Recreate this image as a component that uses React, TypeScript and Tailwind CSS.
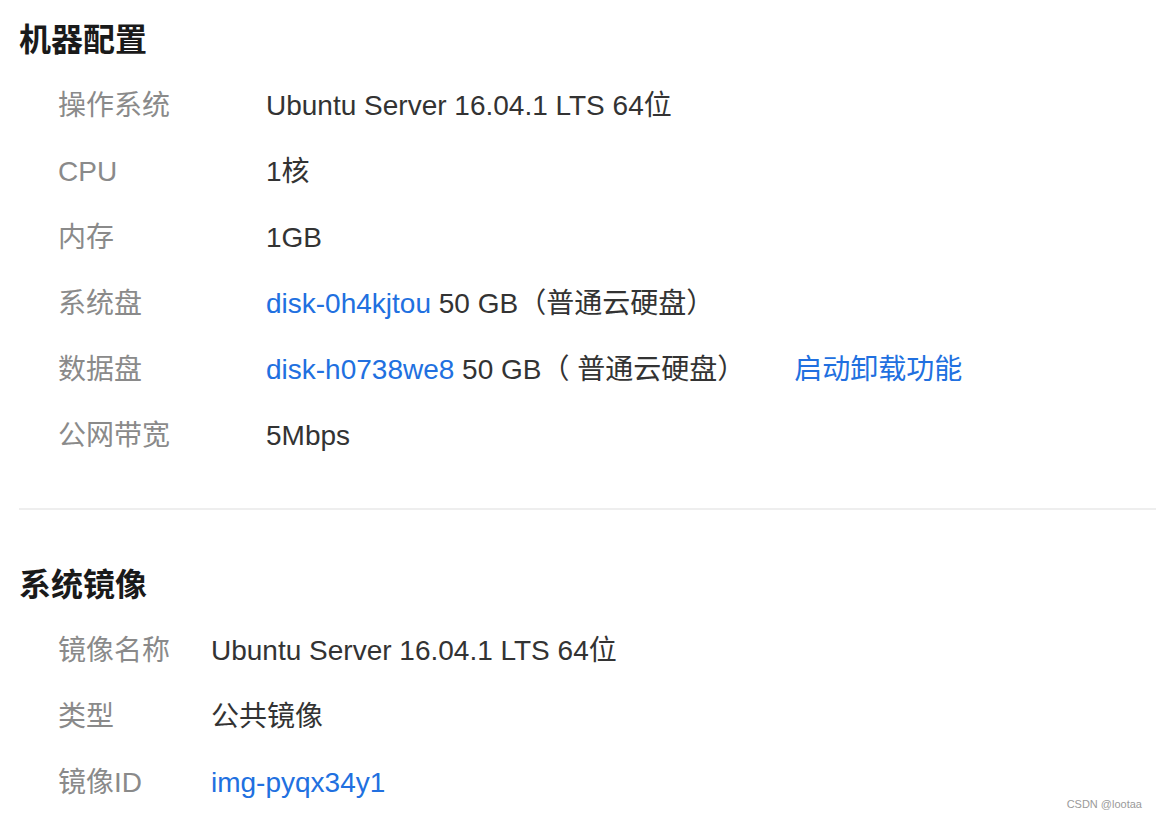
const font = { fontFamily: '"Liberation Sans", "Noto Sans CJK SC", sans-serif' };

type Row = { label: string; value: React.ReactNode };

const machine: Row[] = [
  { label: "操作系统", value: "Ubuntu Server 16.04.1 LTS 64位" },
  { label: "CPU", value: "1核" },
  { label: "内存", value: "1GB" },
  {
    label: "系统盘",
    value: (
      <>
        <span className="text-[#2170e0]">disk-0h4kjtou</span> 50 GB（普通云硬盘）
      </>
    ),
  },
  {
    label: "数据盘",
    value: (
      <>
        <span className="text-[#2170e0]">disk-h0738we8</span> 50 GB（ 普通云硬盘）
        <span className="ml-[49px] text-[#2170e0]">启动卸载功能</span>
      </>
    ),
  },
  { label: "公网带宽", value: "5Mbps" },
];

const image: Row[] = [
  { label: "镜像名称", value: "Ubuntu Server 16.04.1 LTS 64位" },
  { label: "类型", value: "公共镜像" },
  { label: "镜像ID", value: <span className="text-[#2170e0]">img-pyqx34y1</span> },
];

function Section({ title, rows, labelWidth }: { title: string; rows: Row[]; labelWidth: string }) {
  return (
    <section>
      <h2 className="h-[40px] pl-[19px] text-[32px] font-bold leading-[40px] text-[#1a1a1a]">{title}</h2>
      <div className="mt-[13px] pl-[58px]">
        {rows.map((r) => (
          <div key={r.label} className="flex h-[66px] items-center text-[28px]">
            <span className={`${labelWidth} shrink-0 text-[#8a8a8a]`}>{r.label}</span>
            <span className="whitespace-nowrap text-[#333]">{r.value}</span>
          </div>
        ))}
      </div>
    </section>
  );
}

export default function App() {
  return (
    <div className="relative h-[820px] w-[1156px] overflow-hidden bg-white pt-[20px]" style={font}>
      <Section title="机器配置" rows={machine} labelWidth="w-[208px]" />
      <div className="mt-[39px] ml-[19px] h-[2px] bg-[#eeeeee]" />
      <div className="mt-[55px]">
        <Section title="系统镜像" rows={image} labelWidth="w-[153px]" />
      </div>
      <span className="absolute bottom-[8px] right-[14px] text-[11px] text-[#9a9a9a]">CSDN @lootaa</span>
    </div>
  );
}
